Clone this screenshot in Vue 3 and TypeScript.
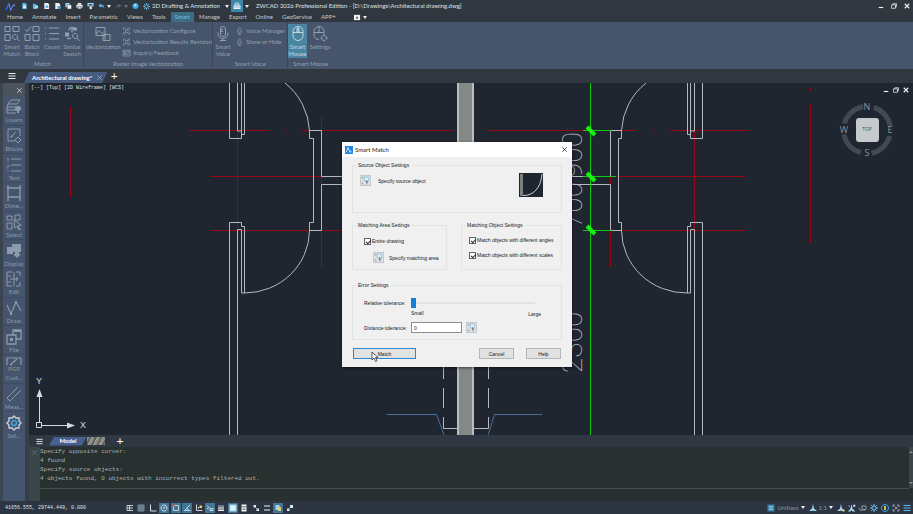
<script setup lang="ts">
import { h, ref } from 'vue'

type Shape = [d: string, fill?: string, stroke?: string, width?: number]

const W = '#eef2f5'
const B = '#6fc3f2'
const icons: Record<string, Shape[]> = {
  logo: [['M1 13 L6 3 L8 3 L3 13Z', '#3d6bf0', 'none'], ['M6 4 L9 13 L12 7 L14 7', 'none', '#5a86ff', 1.6], ['M13 5h2v2h-2z', '#9fb6ff', 'none']],
  newFile: [['M3 1h7l3 3v11H3z', '#5db9ee', 'none'], ['M5 7h6v6H5z', W, 'none']],
  open: [['M2 3h5l2 2h4v3H6l-2 6H2z', '#5db9ee', 'none'], ['M6 8h9l-3 6H4z', '#a7dcf8', 'none']],
  save: [['M3 1h8l3 3v11H3z', W, 'none'], ['M6 7h6v5H6z', '#4ba4dc', 'none']],
  saveAs: [['M3 1h8l3 3v11H3z', W, 'none'], ['M8 8h7v7H8z', '#4ba4dc', 'none']],
  saveAll: [['M1 1h8l2 2v8H1z', '#9fd6f5', 'none'], ['M5 5h8l2 2v8H5z', W, '#2f3740', 1]],
  print: [['M4 1h8v4H4z', W, 'none'], ['M1 5h14v7H1z', W, 'none'], ['M4 9h8v6H4z', '#cfd8df', '#2f3740', 1]],
  plot: [['M1 1h14v8H1z', '#9fd6f5', 'none'], ['M4 4h8v3H4z', '#2f3740', 'none'], ['M6 9h5v6H6z', W, 'none']],
  undo: [['M7 2 L1 7 L7 12 V9 C11 9 13 10 14 14 C15 8 12 5 7 5Z', '#5db9ee', 'none']],
  redo: [['M9 3 L15 7 L9 12 V9 C5 9 3 10 2 13 C2 8 4 5 9 5Z', '#596672', 'none']],
  globe: [['M8 1a7 7 0 1 0 .1 0z', '#3aa5e8', 'none'], ['M4 4q3-2 5 0t2 4q-3 3-5 1z', '#9be0ff', 'none']],
  gear: [['M8 4a4 4 0 1 0 .1 0z', 'none', B, 2], ['M8 0v4M8 12v4M0 8h4M12 8h4M2.5 2.5l3 3M10.5 10.5l3 3M13.5 2.5l-3 3M5.500 10.5l-3 3', 'none', B, 2]],
  box: [['M1 7h14v7H1z', W, 'none'], ['M2 5h12v2H2z', '#bde4f7', 'none'], ['M5 5V2h6v3', 'none', W, 1.5], ['M1 10h14', 'none', '#3c87ac', 1]],
  smartMatch: [['M1 1h5v5H1zM9 1h6v5H9zM1 9h5v6H1z', 'none'], ['M11 9a2.500 2.500 0 1 0 .1 0zM13 13l2.500 2.500', 'none']],
  batch: [['M1 4l2 2 4-5M9 1h6v5H9zM1 9h5v6H1zM9 9h6v6H9z', 'none']],
  count: [['M5 2.500h10M5 8h10M5 13.500h10', 'none', undefined, 1.2], ['M1 2h1v1H1zM1 7.500h1v1H1zM1 13h1v1H1z']],
  similar: [['M5 5a3 3 0 0 1 6 0M8 3v4', 'none', undefined, 1.3], ['M1 7h4v4H1zM9 2h4v3H9z'], ['M3 13h4', 'none', undefined, 1.3], ['M11 8a2.500 2.500 0 1 0 .1 0zM13 12.500l2.500 3', 'none']],
  vector: [['M1 2h9v8H1z', 'none'], ['M1 9l3-4 3 3 2-2', 'none'], ['M12 1v3M14 1v3'], ['M8 9h7v6H8zM10 9v6', 'none']],
  config: [['M2 2h4M2 2v4M10 2h4v4M2 10v4h4M14 10v4h-4M6 5h5v6H6z', 'none', undefined, 1.4]],
  inquiry: [['M1 2h14v12H1zM1 5h14M8 8h6M8 11h4', 'none', undefined, 1.4], ['M3 7h3v5H3z']],
  mic: [['M8 1a2.500 2.500 0 0 0-2.500 2.500v5a2.500 2.500 0 0 0 5 0v-5A2.500 2.500 0 0 0 8 1zM3 7v1a5 5 0 0 0 10 0V7M8 13v2M5 15h6M6 4h2M6 6h2', 'none']],
  mouse: [['M8 1a5 5 0 0 0-5 5v4a5 5 0 0 0 10 0V6a5 5 0 0 0-5-5zM3 7h10M8 1v6', 'none'], ['M7 3h2v4H7z', 'none']],
  mouseGear: [['M7 14a5 5 0 0 1-5-4V6a5 5 0 0 1 10 0v2M2 7h10M7 1v6', 'none'], ['M12 10a2.500 2.500 0 1 0 .1 0zM12 8.500v1.500M12 15v1M8.500 12.500h1M14.500 12.500h1', 'none']],
  layers: [['M5 1h9l-3 4H2zM2 5l-1 3h9M1 8v3h9M1 11v3h9', 'none'], ['M12 7a2.500 2.500 0 0 0-1 5v2h2v-2a2.500 2.500 0 0 0-1-5z']],
  blocks: [['M2 1h12v7M9 13H2V1M5 9l5-5M4 9h2V7', 'none'], ['M12 9l3 3-3 3-3-3z', 'none']],
  text: [['M5 2h10M5 8h10M5 14h10', 'none', undefined, 1.2], ['M1 2h2M2 1v4M1 8h2v2H1v2M1 14h2', 'none', undefined, 0.6]],
  dim: [['M2 0v16M14 0v16M2 3h12M2 12h12M1 3h2M13 3h2', 'none', undefined, 1.3]],
  select: [['M1 2h5v4H1zM9 1h5v5H9zM1 9h5v6H1zM12 14l3 2', 'none'], ['M8 6l7 5-3 .5 2 3.500-1.500 .5-1.700-3.500-2 2z', 'none']],
  display: [['M6 1h9v8H6z'], ['M1 4h6v7H1z'], ['M9 9h4v2h2l-4 4-4-4h2z']],
  edit: [['M6 1H1v14h5M10 1h4v4M14 11v4h-4M8 1v14M4 8h8M10 6l2 2-2 2M1 5h4M1 11h4', 'none']],
  draw: [['M1 5l4 9 5-12 5 9', 'none', undefined, 1.1], ['M9 1h2v2H9zM4 13h2v2H4z']],
  file: [['M1 6h9v9H1zM7 6V1h8v9h-5', 'none', undefined, 1.3], ['M4 9h3v3H4zM8 1h7v2H8z']],
  pgp: [['M1 8V1h14v7M4 8l7-6M4 8h2', 'none', undefined, 1.2]],
  measure: [['M1 12L12 1M4 15L15 4M1 12l3 3', 'none']],
  settings: [['M8 1l2 2h3v3l2 2-2 2v3h-3l-2 2-2-2H3v-3L1 8l2-2V3h3z', 'none', '#c9d0d6', 1.4], ['M8 5.500a2.500 2.500 0 1 0 .1 0z', 'none', '#3aa5e8', 1.6]],
  pick: [['M2 2h3M2 2v3M2 11v3h3M9 14h3', 'none', '#8a9299', 1.2], ['M6 2h7v7H6z', '#eaf6fd', '#5aa7d3', 1], ['M9 6l4 6-2-.3-1 2.300z', '#555b61', 'none']],
  rows: [['M2 3h12M2 8h12M2 13h12M2 3v10M7 3v10', 'none', '#d6dce1', 1.8]],
  gridDots: [['M2 2h12v12H2zM2 6h12M2 10h12M6 2v12M10 2v12', 'none', '#a9c9dd', 1.2]],
  ortho: [['M3 1v13h12', 'none', W, 1.8]],
  polar: [['M8 2a6 6 0 1 0 .1 0zM8 8l3-3M6 8h4', 'none', W, 1.6]],
  osnap: [['M3 3h10v10H3z', 'none', '#e9ecef', 1.5], ['M1 1h4v4H1z', '#e05545', 'none']],
  track: [['M14 2L3 13h12M8 8q3 2 2 5', 'none', W, 1.5]],
  ducs: [['M3 1v12h12', 'none', W, 1.7], ['M9 3h5v5H9z', '#e9cf5a', 'none'], ['M6 6h2v3H6z', W, 'none']],
  dyn: [['M2 3l4 4-4 3M8 9h6v4H8z', 'none', W, 1.6]],
  weight: [['M2 4h12', 'none', W, 1.5], ['M2 8h12', 'none', W, 2.5], ['M2 12.500h12', 'none', W, 3]],
  trans: [['M1 1h14v14H1z', '#b7e2fa', 'none'], ['M4 4h8v8H4z', '#dff3fe', 'none']],
  quick: [['M3 1h10v3H3zM3 5h10v10H3z', W, 'none'], ['M5 8h6M5 11h6', 'none', '#5b6670', 1.4]],
  cycle: [['M3 2h5v5H3zM9 9h5v5H9z', W, 'none'], ['M5 5l7 7', 'none', '#5db9ee', 2]],
  lines: [['M2 4h12M2 12h12', 'none', W, 2]],
  anno: [['M3 2h8v10H3z', '#9fd6f5', 'none'], ['M8 6h6v8H8z', '#e0cf7a', 'none']],
  link: [['M8 2h6v6H8zM2 9h5v5H2z', W, 'none'], ['M3 12l9-9', 'none', '#5db9ee', 1.6]],
  units: [['M1 1h14v14H1z', '#3d84b0', 'none'], ['M4 5h8M4 8h8M4 11h8', 'none', '#b7e2fa', 1.2]],
  scale: [['M8 0l2 9 6 5H9l-1-2-1 2H0l6-5z', '#a7d8f5', 'none']],
  scaleAdd: [['M8 0l2 9 6 5H9l-1-2-1 2H0l6-5z', '#a7d8f5', 'none'], ['M11 11h4v4h-4z', '#e9cf5a', 'none']],
  scaleRun: [['M7 0l2 9 6 6H9l-2-3-2 3H0l5-6z', '#a7d8f5', 'none'], ['M1 3l3 3M11 2h3v3h-3z', '#a7d8f5', '#a7d8f5', 1.5]],
  iso: [['M6 4h8v7H6zM2 8a3 3 0 1 0 5 3M10 11v3', 'none', '#aab3bb', 1.6]],
  perf: [['M8 1a7 7 0 1 0 .1 0z', 'none', '#3aa5e8', 2], ['M6 4h4v8H6z', '#d6b95a', 'none']],
  full: [['M2 6V2h4M10 2h4v4M14 10v4h-4M6 14H2v-4M5 5l6 6M11 5l-6 6', 'none', '#c9d0d6', 1.4]],
  menu: [['M1 3h14M1 8h14M1 13h14', 'none', '#5db9ee', 2.4]],
  burger: [['M1 3h14M1 8h14M1 13h14', 'none', W, 2]],
  min: [['M2 12h12', 'none', W, 3]],
  restore: [['M5 5V2h10v8h-3M1 5h11v9H1z', 'none', W, 2]],
  close: [['M2 2l12 12M14 2L2 14', 'none', W, 3]],
  thin: [['M1 1l14 14M15 1L1 15', 'none', undefined, 2.4]],
  menuBox: [['M1 2h14v12H1z', W, 'none'], ['M8 5l3 5H5z', '#30373f', 'none']],
  app: [['M0 0h16v16H0z', '#1e86dc', 'none'], ['M2 13L6 3l4 10M9 8l5 5', 'none', '#d9f0ff', 1.8]],
}

const Icon = (p: { name: string }) =>
  h('svg', { viewBox: '0 0 16 16', class: 'icon', 'aria-hidden': 'true' },
    icons[p.name].map(([d, fill, stroke, width]) =>
      h('path', { d, fill: fill ?? 'currentColor', stroke: stroke ?? (fill === 'none' ? 'currentColor' : 'none'), 'stroke-width': width ?? 1 })))
Icon.props = ['name']

const quickAccess = ['newFile', 'open', 'save', 'saveAs', 'saveAll', 'print', 'plot']
const menus = ['Home', 'Annotate', 'Insert', 'Parametric', 'Views', 'Tools', 'Smart', 'Manage', 'Export', 'Online', 'GeoService', 'APP+']
const matchTools = [
  { icon: 'smartMatch', label: 'Smart Match' },
  { icon: 'batch', label: 'Batch Block' },
  { icon: 'count', label: 'Count' },
  { icon: 'similar', label: 'Similar Search' },
]
const vectorTools = [
  { icon: 'config', label: 'Vectorization Configure' },
  { icon: 'config', label: 'Vectorization Results Revision' },
  { icon: 'inquiry', label: 'Inquiry/Feedback' },
]
const sideTools = [
  { icon: 'layers', label: 'Layers' },
  { icon: 'blocks', label: 'Blocks' },
  { icon: 'text', label: 'Text' },
  { icon: 'dim', label: 'Dime...' },
  { icon: 'select', label: 'Select' },
  { icon: 'display', label: 'Display' },
  { icon: 'edit', label: 'Edit' },
  { icon: 'draw', label: 'Draw' },
  { icon: 'file', label: 'File' },
  { icon: 'pgp', label: 'Cust...' },
  { icon: 'measure', label: 'Meas...' },
  { icon: 'settings', label: 'Set...' },
]
const modes = [
  { icon: 'rows', on: false }, { icon: 'gridDots', on: false }, { icon: 'ortho', on: false },
  { icon: 'polar', on: true }, { icon: 'osnap', on: true }, { icon: 'track', on: true },
  { icon: 'ducs', on: false }, { icon: 'dyn', on: true }, { icon: 'weight', on: false },
  { icon: 'trans', on: true }, { icon: 'quick', on: false }, { icon: 'cycle', on: false },
  { icon: 'lines', on: false }, { icon: 'anno', on: true }, { icon: 'link', on: false },
]
const statusTools = ['scaleAdd', 'scaleRun', 'iso', 'gear', 'perf', 'full', 'menu']
const history = [
  'Specify opposite corner:',
  '4 found',
  'Specify source objects:',
  '4 objects found, 0 objects with incorrect types filtered out.',
]

const entire = ref(true)
const angles = ref(true)
const scales = ref(true)
const tolerance = ref(0)
const distance = ref('0')
const command = ref('')
</script>

<template>
  <div class="cad">
    <header class="titlebar">
      <Icon name="logo" class="logo" />
      <button v-for="q in quickAccess" :key="q" class="quick" :aria-label="q"><Icon :name="q" /></button>
      <button class="quick undo" aria-label="Undo"><Icon name="undo" /><i class="caret"></i></button>
      <button class="quick undo" aria-label="Redo"><Icon name="redo" /><i class="caret dim"></i></button>
      <button class="quick globe" aria-label="Online"><Icon name="globe" /></button>
      <button class="space"><Icon name="gear" /><span>2D Drafting &amp; Annotation</span><i class="caret"></i></button>
      <button class="toolbox" aria-label="Toolbox"><Icon name="box" /></button>
      <i class="caret"></i>
      <h1>ZWCAD 2026 Professional Edition - [D:\Drawings\Architectural drawing.dwg]</h1>
      <div class="window-buttons">
        <button aria-label="Minimize"><Icon name="min" /></button>
        <button aria-label="Restore"><Icon name="restore" /></button>
        <button aria-label="Close"><Icon name="close" /></button>
      </div>
    </header>

    <nav class="menus">
      <button v-for="m in menus" :key="m" :class="{ active: m === 'Smart' }">{{ m }}</button>
      <button class="more" aria-label="Ribbon display"><Icon name="menuBox" /><i class="caret"></i></button>
    </nav>

    <section class="ribbon">
      <div class="group match">
        <div class="tools">
          <button v-for="t in matchTools" :key="t.label" class="big"><Icon :name="t.icon" /><span>{{ t.label }}</span></button>
        </div>
        <h2>Match</h2>
      </div>
      <div class="group raster">
        <div class="tools">
          <button class="big wide"><Icon name="vector" /><span>Vectorization</span></button>
          <div class="stack">
            <button v-for="t in vectorTools" :key="t.label" class="small"><Icon :name="t.icon" />{{ t.label }}</button>
          </div>
        </div>
        <h2>Raster Image Vectorization</h2>
      </div>
      <div class="group voice">
        <div class="tools">
          <button class="big"><Icon name="mic" /><span>Smart Voice</span></button>
          <div class="stack">
            <button class="small"><Icon name="mic" />Voice Manager</button>
            <button class="small"><Icon name="mic" />Show or Hide</button>
          </div>
        </div>
        <h2>Smart Voice</h2>
      </div>
      <div class="group pointer">
        <div class="tools">
          <button class="big active"><Icon name="mouse" /><span>Smart Mouse</span></button>
          <button class="big"><Icon name="mouseGear" /><span>Settings</span></button>
        </div>
        <h2>Smart Mouse</h2>
      </div>
    </section>

    <nav class="documents">
      <button class="burger" aria-label="Documents"><Icon name="burger" /></button>
      <div class="doc-tab"><span>Architectural drawing*</span><Icon name="thin" /></div>
      <button class="plus" aria-label="New drawing">+</button>
    </nav>

    <div class="body">
      <aside class="side">
        <div class="side-head"><button aria-label="Close panel"><Icon name="thin" /></button></div>
        <div class="side-tools">
          <button v-for="t in sideTools" :key="t.label" :class="{ lit: t.icon === 'settings' }">
            <Icon :name="t.icon" />
            <b v-if="t.icon === 'pgp'">PGP</b>
            <span>{{ t.label }}</span>
          </button>
        </div>
      </aside>

      <main class="work">
        <div class="canvas">
          <svg class="drawing" viewBox="29 83 884 352" preserveAspectRatio="xMidYMid slice">
            <g class="axis">
              <path d="M70.500 107V197M189 130.500H270M285 130.500h2M302 130.500H454M237.500 131V230M210 176.500H321M210 230.500H342M321.500 116V267" />
              <path d="M487 130.500H636M653 130.500h2M670 130.500H750M694.500 131V230M611 176.500H745M611 230.500H745M610.500 177V267M810.500 104V243M810.500 88v3" />
            </g>
            <g class="wall">
              <path d="M229.500 83V138.500H241.500V83M237.500 83V131H241.500M244.500 83V134.500H241.500" />
              <path d="M229.500 435V222.500H241.500V226.500H244.500V293M237.500 435V229.500H241.500V293H244.500A65 63 0 0 0 309.500 230.500" />
              <path d="M285 83A65 65 0 0 1 309.500 130.500H321.500V176.500H342M309.500 130.500V138.500H313.500V222.500H309.500V230.500H321.500V184.500H342" />
              <path d="M702.500 83V138.500H690.500V83M694.500 83V131H690.500M687.500 83V134.500H690.500" />
              <path d="M702.500 435V222.500H690.500V226.500H687.500V293M694.500 435V229.500H690.500V293H687.500A65 63 0 0 1 621.500 230.500" />
              <path d="M646 83A65 65 0 0 0 621.500 130.500H610.500V176.500H572M621.500 130.500V138.500H618.500V222.500H621.500V230.500H610.500V184.500H572" />
              <path d="M443.500 367V379M443.500 388V408M443.500 417V428.500H458M488.500 367V379M488.500 388V408M488.500 417V428.500H474" />
            </g>
            <path class="column" d="M458 82H473V436H458Z" />
            <path class="slab" d="M387 414.500H436.500L444 435M542 414.500H494.500L488 435" />
            <g class="dimension">
              <path d="M590.500 83V435M583 130.500H611M583 176.500H616M583 230.500H611" />
              <path class="tick" d="M587 127l8 8M587 173l8 8M587 226l8 8" />
            </g>
            <g class="dim-text">
              <text transform="translate(582 178) rotate(-90)">900</text>
              <text transform="translate(582 228) rotate(-90)">700</text>
              <text transform="translate(582 373) rotate(-90)">2300</text>
            </g>
            <g class="ucs">
              <path d="M36.500 422.500h5v5h-5zM39.500 422V392M42 425.500H72" />
              <path class="tip" d="M39.500 389l3 8h-6zM75 425.500l-8-3v6z" />
              <text x="39" y="384">Y</text>
              <text x="83" y="428">X</text>
            </g>
            <g class="compass">
              <circle cx="867" cy="130" r="23.500" />
              <rect x="856" y="118" width="23" height="24" rx="3" />
              <text x="867" y="110">N</text>
              <text x="844" y="133">W</text>
              <text x="890" y="133">E</text>
              <text x="867" y="156">S</text>
              <text class="face" x="867" y="131">TOP</text>
            </g>
          </svg>
          <div class="view-head">
            <span>[--] [Top] [2D Wireframe] [WCS]</span>
            <div class="view-buttons">
              <button aria-label="Minimize drawing"><Icon name="min" /></button>
              <button aria-label="Restore drawing"><Icon name="restore" /></button>
              <button aria-label="Close drawing"><Icon name="close" /></button>
            </div>
          </div>

          <form class="dialog" role="dialog" aria-label="Smart Match" @submit.prevent>
            <div class="dialog-title">
              <Icon name="app" /><span>Smart Match</span>
              <button type="button" aria-label="Close"><Icon name="thin" /></button>
            </div>
            <div class="dialog-body">
              <fieldset class="source">
                <legend>Source Object Settings</legend>
                <button type="button" class="pick" aria-label="Pick source"><Icon name="pick" /></button>
                <span>Specify source object</span>
                <svg class="preview" viewBox="0 0 24 24">
                  <path d="M0 0h24v24H0z" fill="#20262f" />
                  <path d="M1 1h3v22H1z" fill="#7b817f" />
                  <path d="M4 22.500C14 23 22 15 23 1" fill="none" stroke="#c4c9cc" />
                </svg>
              </fieldset>
              <div class="pair">
                <fieldset class="area">
                  <legend>Matching Area Settings</legend>
                  <label><input v-model="entire" type="checkbox" />Entire drawing</label>
                  <div class="pick-row">
                    <button type="button" class="pick" aria-label="Pick area"><Icon name="pick" /></button>
                    <span>Specify matching area</span>
                  </div>
                </fieldset>
                <fieldset class="object">
                  <legend>Matching Object Settings</legend>
                  <label><input v-model="angles" type="checkbox" />Match objects with different angles</label>
                  <label><input v-model="scales" type="checkbox" />Match objects with different scales</label>
                </fieldset>
              </div>
              <fieldset class="error">
                <legend>Error Settings</legend>
                <label for="tolerance">Relative tolerance:</label>
                <input id="tolerance" v-model.number="tolerance" type="range" min="0" max="100" />
                <div class="ends"><span>Small</span><span>Large</span></div>
                <label for="distance">Distance tolerance:</label>
                <div class="distance">
                  <input id="distance" v-model="distance" type="text" />
                  <button type="button" class="pick" aria-label="Pick distance"><Icon name="pick" /></button>
                </div>
              </fieldset>
              <div class="actions">
                <button type="submit" class="primary">Match
                  <svg class="cursor" viewBox="0 0 8 12"><path d="M1 1v8l2-2 1.500 3.500 1.500-.7L4.500 6.500H7z" fill="#fff" stroke="#333" stroke-width=".8" /></svg>
                </button>
                <button type="button">Cancel</button>
                <button type="button">Help</button>
              </div>
            </div>
          </form>
        </div>

        <nav class="layouts">
          <button class="burger" aria-label="Layouts"><Icon name="burger" /></button>
          <button class="model">Model</button>
          <button class="thumb" aria-label="Layout"></button>
          <button class="plus" aria-label="New layout">+</button>
        </nav>

        <section class="console">
          <div class="grip"><Icon name="thin" /></div>
          <div class="log">
            <p v-for="line in history" :key="line">{{ line }}</p>
            <input v-model="command" type="text" aria-label="Command" />
          </div>
          <div class="scroll"><i class="up"></i><i class="down"></i></div>
        </section>
      </main>
    </div>

    <footer class="status">
      <output>41656.555, 29744.449, 0.000</output>
      <div class="modes">
        <button v-for="m in modes" :key="m.icon" :class="{ on: m.on }" :aria-label="m.icon"><Icon :name="m.icon" /></button>
      </div>
      <div class="right">
        <button class="unit"><Icon name="units" />Unitless<i class="caret"></i></button>
        <button class="unit"><Icon name="scale" />1:1<i class="caret"></i></button>
        <button v-for="s in statusTools" :key="s" :aria-label="s"><Icon :name="s" /></button>
      </div>
    </footer>
  </div>
</template>

<style>
body { background: #20262f; }
</style>

<style scoped>
* { box-sizing: border-box; }
.cad {
  display: flex;
  flex-direction: column;
  min-height: 100vh;
  background: #30373f;
  color: #dfe5ea;
  font: 6px/8px Lato, "Open Sans", sans-serif;
}
button {
  display: flex;
  align-items: center;
  justify-content: center;
  margin: 0;
  padding: 0;
  border: 0;
  background: none;
  color: inherit;
  font: inherit;
  white-space: nowrap;
}
h1, h2, p { margin: 0; font: inherit; white-space: nowrap; }
.icon { display: block; width: 8px; height: 8px; flex: none; }
.caret {
  width: 0;
  height: 0;
  flex: none;
  border: 2px solid transparent;
  border-top: 3px solid #eef2f5;
  border-bottom: 0;
}
.caret.dim { border-top-color: #6b7680; }

.titlebar { display: flex; align-items: center; height: 12px; padding-left: 4px; }
.logo { width: 12px; height: 11px; margin-right: 3px; }
.quick { width: 11px; }
.quick .icon { width: 7px; height: 8px; }
.undo { width: 17px; gap: 2px; }
.globe { width: 10px; }
.space { margin-left: 3px; gap: 2px; }
.space .icon { width: 7px; height: 7px; }
.space .caret { margin-left: 3px; }
.toolbox { width: 12px; height: 12px; margin: 0 2px; background: #3c87ac; }
.titlebar h1 { margin-left: 7px; }
.window-buttons { display: flex; gap: 7px; margin-left: auto; padding-right: 3px; }
.window-buttons .icon { width: 6px; height: 6px; }

.menus { display: flex; gap: 1px; height: 10px; padding-left: 3px; }
.menus button { padding: 0 4px; color: #c3cad1; }
.menus .active { background: #3d6c84; color: #6fc3ea; }
.menus .more { gap: 2px; margin-left: 8px; }
.more .icon { width: 8px; height: 7px; }

.ribbon { display: flex; height: 47px; background: #46556b; color: #91a0b1; }
.group { display: flex; flex-direction: column; border-right: 1px solid #3a4658; }
.group h2 { margin-top: auto; line-height: 10px; text-align: center; }
.pointer { border: 0; }
.tools { display: flex; height: 36px; padding-top: 2px; }
.big { flex-direction: column; justify-content: flex-start; width: 20px; height: 34px; padding-top: 1px; gap: 1px; line-height: 7px; }
.big .icon { width: 16px; height: 17px; }
.big span { white-space: normal; text-align: center; }
.match { width: 84px; padding-left: 2px; }
.raster { width: 129px; }
.wide { width: 40px; }
.stack { display: flex; flex-direction: column; padding-top: 1px; }
.small { justify-content: flex-start; gap: 2px; height: 11px; }
.small .icon { width: 9px; height: 8px; }
.voice { width: 75px; }
.voice .stack { padding-left: 2px; }
.pointer .active { background: #4a86a2; color: #c2d6e0; width: 19px; }
.pointer .big + .big { width: 26px; }

.documents { display: flex; align-items: center; height: 14px; }
.burger { width: 24px; }
.burger .icon { width: 8px; height: 8px; }
.doc-tab {
  display: flex;
  align-items: center;
  gap: 5px;
  height: 11px;
  margin-top: 3px;
  padding: 0 5px 0 8px;
  background: #46597f;
  color: #fff;
  font-weight: 700;
  clip-path: polygon(6% 0, 100% 0, 94% 100%, 0 100%);
}
.doc-tab .icon { width: 5px; height: 5px; color: #9fb0c8; }
.plus { width: 14px; font-size: 12px; color: #fff; }

.body { display: flex; flex: 1; }
.side { width: 29px; padding-right: 4px; background: #353e49; border-left: 3px solid #3b4552; display: flex; flex-direction: column; }
.side-head { display: flex; justify-content: flex-end; align-items: center; height: 14px; padding-right: 3px; background: #4b545d; }
.side-head .icon { width: 5px; height: 5px; }
.side-tools { flex: 1; display: grid; grid-template-rows: repeat(12, 1fr) 60px; background: #45556d; color: #8b9aac; }
.side-tools button { flex-direction: column; gap: 1px; padding-top: 2px; border-bottom: 1px solid #3c4b62; }
.side-tools .icon { width: 16px; height: 16px; }
.side-tools b { margin-top: -9px; color: #8a8672; }
.side-tools .lit { border: 0; }

.work { flex: 1; min-width: 0; display: flex; flex-direction: column; }
.canvas { position: relative; flex: 1; min-height: 340px; background: #20262f; overflow: hidden; }
.drawing { position: absolute; inset: 0; width: 100%; height: 100%; }
.axis path { fill: none; stroke: #960815; }
.wall path { fill: none; stroke: #b4b9c0; }
.column { fill: #858986; stroke: #b9bdbd; stroke-width: 2; }
.slab { fill: none; stroke: #48709c; }
.dimension path { fill: none; stroke: #0fca0c; }
.dimension .tick { stroke: #12f40c; stroke-width: 4; }
.dim-text text { fill: #b9bfc6; font: 100 28px Roboto, Lato, sans-serif; }
.ucs path { fill: none; stroke: #d5dade; }
.ucs .tip { fill: #d5dade; stroke: none; }
.ucs text { fill: #d5dade; font: 9px "Liberation Sans", sans-serif; text-anchor: middle; }
.compass circle { fill: none; stroke: #424955; stroke-width: 5; stroke-dasharray: 26 11; stroke-dashoffset: -6; }
.compass rect { fill: #c6cacc; }
.compass text { fill: #8a919b; font: 9px "Open Sans", sans-serif; text-anchor: middle; }
.compass .face { fill: #4b5157; font-size: 5px; }
.view-head { position: relative; display: flex; justify-content: space-between; padding: 1px 4px 0 2px; font: 5px/8px "Liberation Mono", monospace; }
.view-buttons { display: flex; gap: 4px; padding-top: 3px; }
.view-buttons .icon { width: 6px; height: 6px; }

.dialog {
  position: absolute;
  left: 313px;
  top: 59px;
  width: 230px;
  background: #eff0ef;
  color: #16191c;
  font: 5px/8px "Liberation Sans", sans-serif;
  box-shadow: 0 1px 3px #0008;
}
.dialog-title { display: flex; align-items: center; gap: 2px; height: 15px; padding: 0 5px 0 3px; background: #fff; font: 6px/8px Lato, "Open Sans", sans-serif; }
.dialog-title button { margin-left: auto; }
.dialog-title button .icon { width: 5px; height: 5px; }
.dialog-body { padding: 4px 10px 8px; }
fieldset { min-width: 0; margin: 0; padding: 0; border: 1px solid #e2e4e4; white-space: nowrap; }
legend { margin-left: -4px; padding: 0 2px; line-height: 8px; }
.pick { width: 11px; height: 11px; flex: none; background: #dfe1e2; border: 1px solid #c6c9cb; }
.pick .icon { width: 9px; height: 9px; }
.source { display: grid; grid-template-columns: 11px 1fr 24px; column-gap: 7px; height: 52px; padding: 4px 18px 0 7px; align-items: start; }
.source .pick { margin-top: 2px; }
.source span { padding-top: 4px; }
.preview { width: 24px; height: 24px; }
.pair { display: flex; justify-content: space-between; margin-top: 8px; }
.pair fieldset { height: 49px; }
.area { width: 95px; padding: 8px 0 0 11px; }
.area legend, .error legend { margin-left: -8px; }
.object { width: 101px; padding: 7px 0 0 7px; }
.object label + label { margin-top: 7px; }
.dialog label { display: flex; align-items: center; gap: 1px; }
input[type="checkbox"] { appearance: none; flex: none; position: relative; width: 7px; height: 7px; margin: 0; border: 1px solid #5d6266; background: #fff; }
input[type="checkbox"]:checked::after { content: ""; position: absolute; left: 1px; top: 1px; width: 4px; height: 2px; border: solid #2c3034; border-width: 0 0 1px 1px; rotate: -45deg; }
.pick-row { display: flex; align-items: center; gap: 5px; margin: 7px 0 0 9px; }
.error { display: grid; grid-template-columns: 46px 124px; column-gap: 1px; align-content: start; height: 59px; margin-top: 11px; padding: 9px 0 0 11px; }
input[type="range"] { appearance: none; width: 124px; height: 10px; margin: 0; background: none; }
input[type="range"]::-webkit-slider-runnable-track { height: 2px; background: #e1e3e4; }
input[type="range"]::-webkit-slider-thumb { appearance: none; width: 5px; height: 10px; margin-top: -4px; background: #1480d8; }
.ends { grid-column: 2; display: flex; justify-content: space-between; height: 14px; padding-top: 1px; }
.ends span:last-child { margin: 1px -6px 0 0; }
.distance { display: flex; gap: 4px; }
input[type="text"] { font: inherit; }
.distance input { width: 51px; height: 11px; padding: 0 2px; border: 1px solid #8b8f92; background: #fff; color: inherit; }
.actions { display: flex; align-items: center; gap: 12px; margin: 8px 1px 0; }
.actions button { width: 35px; height: 11px; background: #e1e2e2; border: 1px solid #b4b7b9; }
.actions .primary { position: relative; width: 63px; margin-right: auto; border-color: #2f87d0; }
.cursor { position: absolute; left: 17px; top: 2px; width: 8px; height: 12px; }

.layouts { display: flex; align-items: center; height: 12px; background: #2f3742; }
.layouts .burger { width: 20px; }
.layouts .burger .icon { width: 7px; height: 7px; }
.model { width: 38px; height: 9px; background: #46618f; color: #fff; font-weight: 700; clip-path: polygon(14% 0, 100% 0, 86% 100%, 0 100%); }
.thumb { width: 18px; height: 8px; background: repeating-linear-gradient(115deg, #8c8c84 0 2px, #5e605c 2px 4px, #a09f96 4px 5px); }
.layouts .plus { width: 30px; }

.console { display: flex; height: 54px; background: #293030; color: #a9b0b0; font: 6px/9px "Liberation Mono", monospace; }
.grip { width: 11px; padding: 3px; background: #3b464b; color: #6d777c; }
.grip .icon { width: 5px; height: 5px; }
.log { flex: 1; min-width: 0; }
.log input { display: block; width: 100%; height: 12px; margin-top: 5px; padding: 0; border: 0; border-top: 1px solid #454d4d; background: none; color: inherit; outline: 0; }
.scroll { width: 4px; height: 41px; display: flex; flex-direction: column; justify-content: space-between; background: #3b4447; padding: 2px 0; }
.up, .down { border: 2px solid transparent; }
.up { border-bottom-color: #8b9396; }
.down { border-top-color: #8b9396; }

.status { display: flex; align-items: center; height: 13px; padding: 0 2px 0 5px; background: #2c3541; }
.status output { width: 120px; font: 5px/8px "Liberation Mono", monospace; }
.modes { display: grid; grid-auto-flow: column; grid-auto-columns: 10px; justify-content: space-between; width: 170px; }
.modes button { height: 10px; }
.modes .on { background: #437694; }
.modes .icon { width: 8px; height: 8px; }
.right { display: flex; gap: 3px; margin-left: auto; color: #8b949d; }
.unit { gap: 2px; margin-right: 1px; }
.right .icon { width: 8px; height: 8px; }
</style>
